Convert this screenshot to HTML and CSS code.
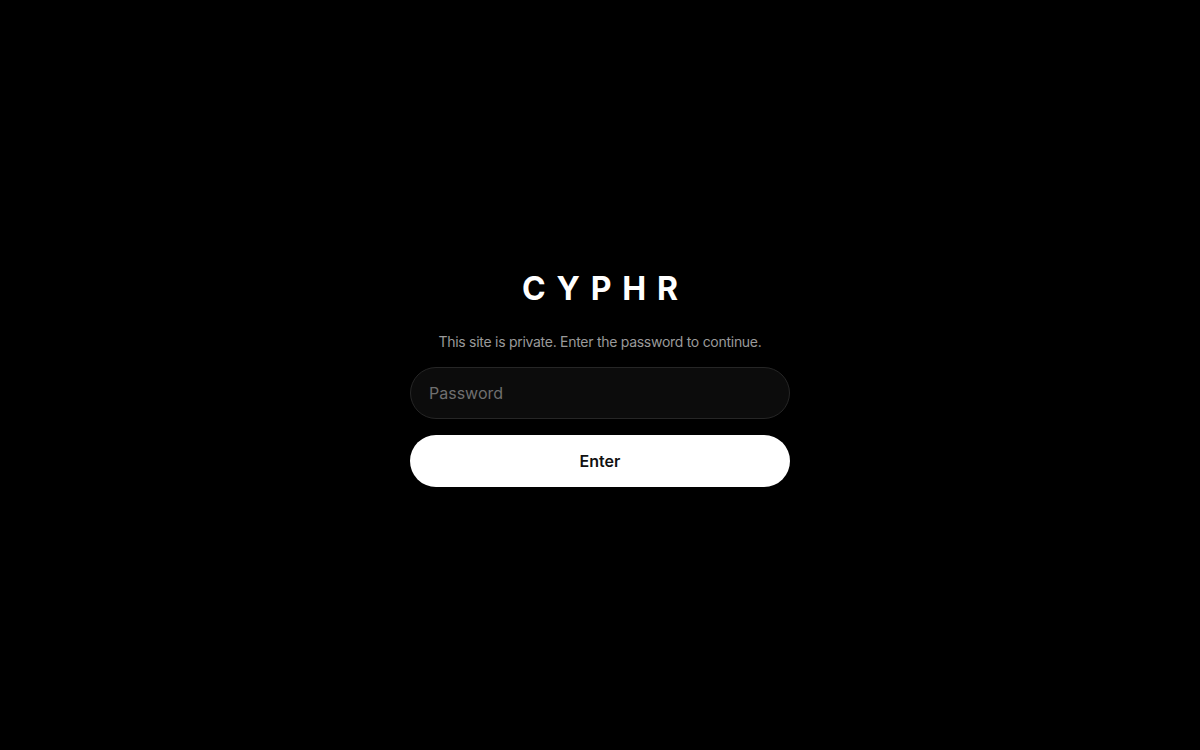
FILE: index.html
```html
<!DOCTYPE html>
<html lang="en">
<head>
<meta charset="utf-8">
<title>CYPHR</title>
<link rel="stylesheet" href="styles.css">
</head>
<body>
<main class="gate">
  <form class="card">
    <h1 class="logo">CYPHR</h1>
    <p class="note">This site is private. Enter the password to continue.</p>
    <input class="field" type="password" placeholder="Password">
    <button class="btn" type="button">Enter</button>
  </form>
</main>
</body>
</html>
```
FILE: styles.css
```css
html, body {
  margin: 0;
  height: 100%;
  background: #000;
}
body {
  font-family: Inter, "Noto Sans", sans-serif;
  color: #fff;
}
.gate {
  height: 100%;
  display: flex;
  align-items: center;
  justify-content: center;
}
.card {
  width: 380px;
  display: flex;
  flex-direction: column;
  align-items: stretch;
  margin-top: 4px;
}
.logo {
  margin: 0;
  text-align: center;
  font-size: 32px;
  font-weight: 700;
  letter-spacing: 0.34em;
  padding-left: 0.34em;
  line-height: 44px;
}
.note {
  margin: 22px 0 16px;
  text-align: center;
  font-size: 14px;
  color: #9a9a9a;
  letter-spacing: -0.02em;
  line-height: 18px;
}
.field {
  box-sizing: border-box;
  height: 52px;
  border-radius: 26px;
  border: 1px solid #262626;
  background: #0c0c0c;
  padding: 0 18px;
  font-family: inherit;
  font-size: 16px;
  color: #fff;
  outline: none;
}
.field::placeholder {
  color: #6f6f6f;
}
.btn {
  margin-top: 16px;
  height: 52px;
  border-radius: 26px;
  border: none;
  background: #fff;
  color: #111;
  font-family: inherit;
  font-size: 16px;
  font-weight: 600;
}
```
